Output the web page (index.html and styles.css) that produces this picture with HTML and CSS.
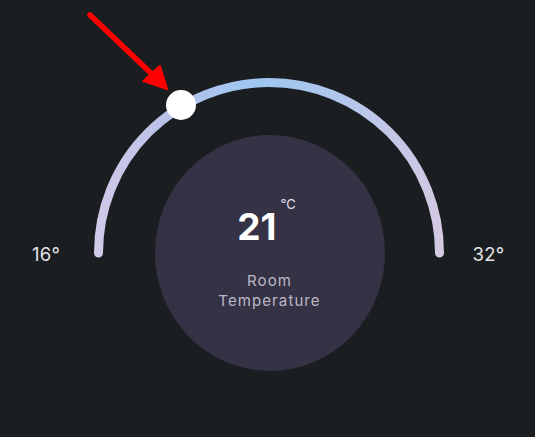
FILE: index.html
```html
<!DOCTYPE html>
<html lang="en">
<head>
<meta charset="utf-8">
<title>Thermostat</title>
<link rel="stylesheet" href="styles.css">
</head>
<body>
<main class="stage">
  <div class="row">
    <span class="limit limit-min">16°</span>
    <div class="dial">
      <div class="value">
        <span class="num">21</span>
        <span class="unit">°C</span>
      </div>
      <div class="caption">Room<br>Temperature</div>
    </div>
    <span class="limit limit-max">32°</span>
  </div>
  <svg class="overlay" width="535" height="437" viewBox="0 0 535 437" aria-hidden="true">
    <defs>
      <linearGradient id="arcGrad" x1="94" y1="0" x2="444" y2="0" gradientUnits="userSpaceOnUse">
        <stop offset="0" stop-color="#d2c9e8"/>
        <stop offset="0.22" stop-color="#b7c1e9"/>
        <stop offset="0.45" stop-color="#9dc7f1"/>
        <stop offset="0.62" stop-color="#a9c5ee"/>
        <stop offset="1" stop-color="#d4c9e2"/>
      </linearGradient>
    </defs>
    <path d="M 98.5 253 A 170.5 170.5 0 0 1 439.5 253" fill="none" stroke="url(#arcGrad)" stroke-width="9" stroke-linecap="round"/>
    <circle cx="181" cy="105" r="15" fill="#ffffff"/>
    <g fill="#ff0000" stroke="#ff0000">
      <line x1="90" y1="15" x2="156" y2="78" stroke-width="5.5" stroke-linecap="round"/>
      <polygon points="167.5,89.5 143,81 160,65.5" stroke-width="1.5" stroke-linejoin="round"/>
    </g>
  </svg>
</main>
</body>
</html>
```

FILE: styles.css
```css
* {
  box-sizing: border-box;
}

html, body {
  margin: 0;
  padding: 0;
  background: #1b1e21;
}

body {
  font-family: "Inter", "Noto Sans", sans-serif;
  color: #ffffff;
}

.stage {
  position: relative;
  width: 535px;
  height: 437px;
  padding-top: 135px;
  overflow: hidden;
}

.row {
  display: grid;
  grid-template-columns: 1fr 230px 1fr;
  align-items: start;
  margin-right: -4px;
}

.limit {
  margin-top: 109px;
  font-size: 18.5px;
  line-height: 20px;
  font-weight: 400;
  color: #e2e2e6;
  letter-spacing: 0.3px;
}

.limit-min {
  justify-self: start;
  padding-left: 32px;
}

.limit-max {
  justify-self: start;
  padding-left: 88px;
}

.dial {
  width: 230px;
  height: 236px;
  border-radius: 50%;
  background: #353245;
  display: flex;
  flex-direction: column;
  align-items: center;
  padding-top: 73px;
}

.value {
  display: flex;
  align-items: flex-start;
  margin-left: -6px;
}

.num {
  font-size: 37px;
  line-height: 37px;
  font-weight: 700;
  color: #ffffff;
}

.unit {
  font-size: 13px;
  line-height: 13px;
  margin-top: -10px;
  margin-left: 4px;
  color: #e4e2ea;
}

.caption {
  margin-top: 26px;
  font-size: 15px;
  line-height: 20px;
  text-align: center;
  color: #bcb8c6;
  letter-spacing: 1.1px;
}

.overlay {
  position: absolute;
  left: 0;
  top: 0;
  pointer-events: none;
}
```
